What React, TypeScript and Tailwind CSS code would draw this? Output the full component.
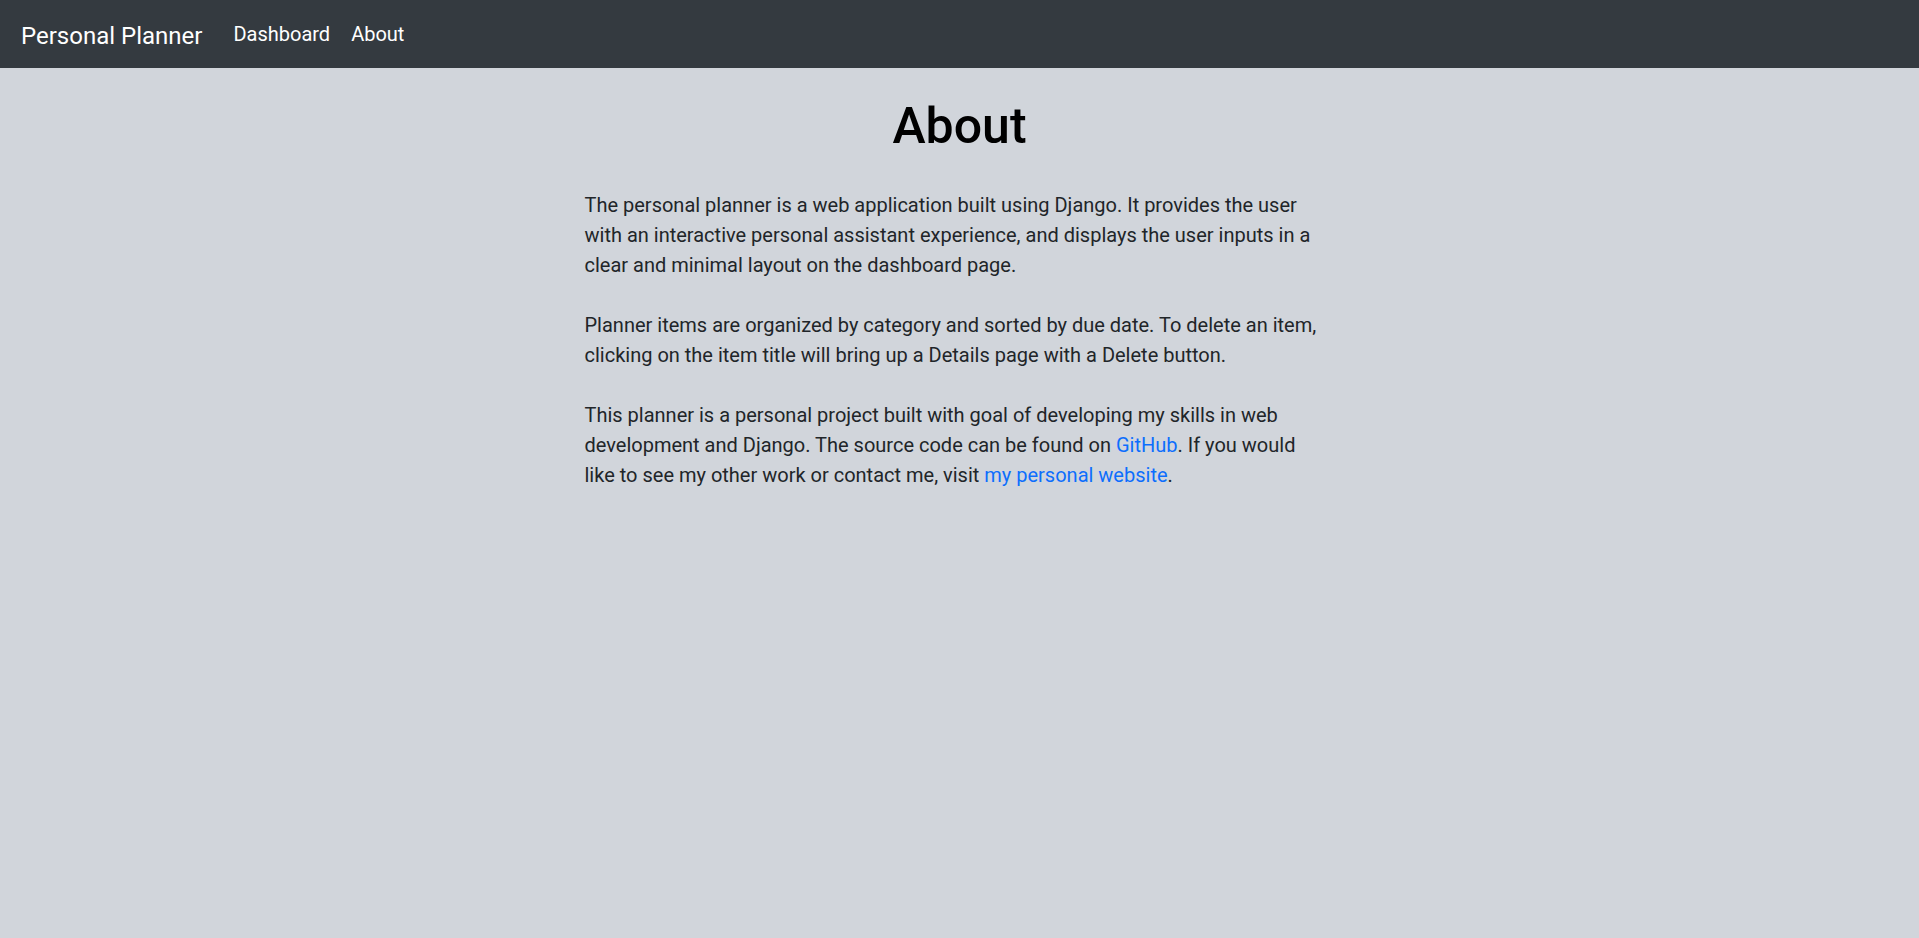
export default function App() {
  return (
    <div className="min-h-[938px] bg-[#d1d5db] font-['Roboto',_'Liberation_Sans',_sans-serif]">
      <nav className="flex h-[68px] items-center bg-[#343a40] pl-[21px]">
        <a href="#" className="mt-[3px] text-[24px] leading-[36px] text-white">
          Personal Planner
        </a>
        <div className="ml-[31px] flex items-center gap-[21px] text-[20px] leading-[30px] text-white">
          <a href="#">Dashboard</a>
          <a href="#">About</a>
        </div>
      </nav>
      <main className="mx-auto w-[750px] pr-[12px] text-[20px] leading-[30px] text-[#212529]">
        <h1 className="mt-[28px] mb-[34px] pl-[12px] text-center text-[50px] leading-[60px] font-medium text-black">
          About
        </h1>
        <p className="mb-[30px]">
          The personal planner is a web application built using Django. It provides the user with an
          interactive personal assistant experience, and displays the user inputs in a clear and minimal
          layout on the dashboard page.
        </p>
        <p className="mb-[30px]">
          Planner items are organized by category and sorted by due date. To delete an item, clicking on
          the item title will bring up a Details page with a Delete button.
        </p>
        <p>
          This planner is a personal project built with goal of developing my skills in web development
          and Django. The source code can be found on{' '}
          <a href="#" className="text-[#0d6efd]">
            GitHub
          </a>
          . If you would like to see my other work or contact me, visit{' '}
          <a href="#" className="text-[#0d6efd]">
            my personal website
          </a>
          .
        </p>
      </main>
    </div>
  );
}
